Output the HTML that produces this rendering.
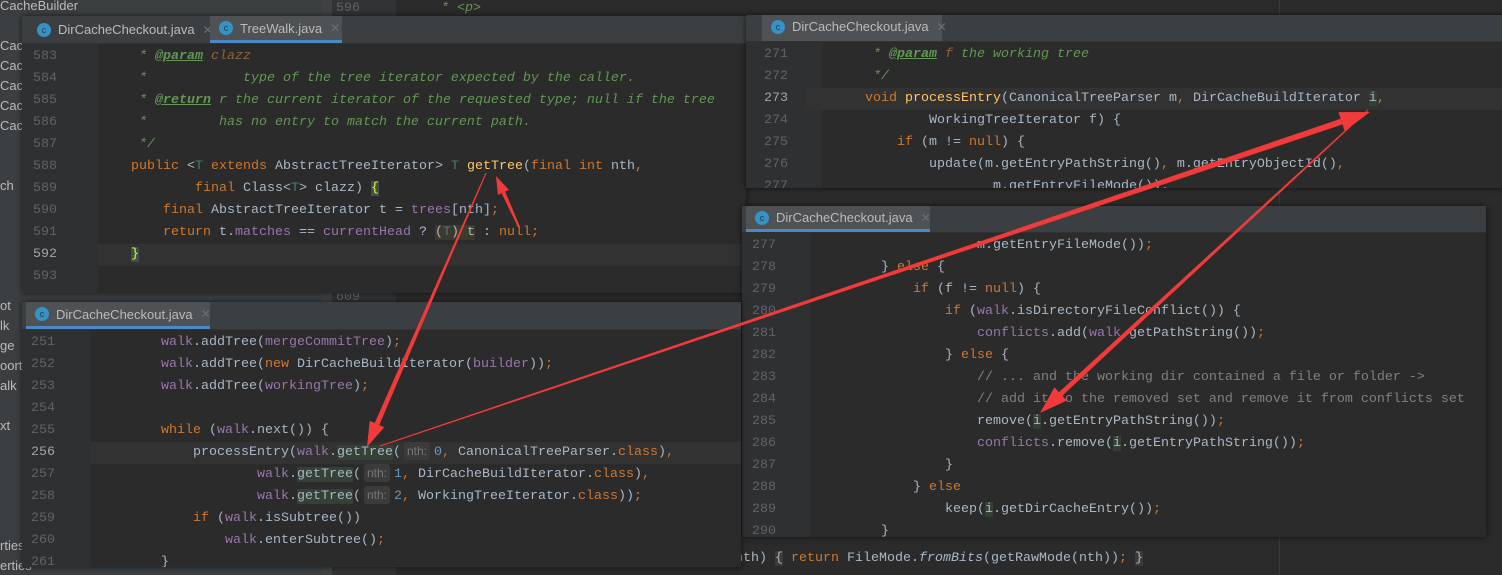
<!DOCTYPE html>
<html><head><meta charset="utf-8">
<style>
*{margin:0;padding:0;box-sizing:border-box}
body{width:1502px;height:575px;overflow:hidden;background:#2b2b2b;position:relative;font-family:"Liberation Mono",monospace;font-size:13.33px;color:#a9b7c6}
.abs{position:absolute}
.panel{position:absolute;background:#2b2b2b;overflow:hidden;box-shadow:0 0 6px rgba(0,0,0,.6)}
.tabbar{position:absolute;left:0;right:0;top:0;background:#3c3f41;border-bottom:1px solid #323232}
.tab{position:absolute;top:0;height:100%;font-family:"Liberation Sans",sans-serif;font-size:13px;color:#bbbbbb;padding-left:30px;display:flex;align-items:center}
.tab.act{border-bottom:3px solid #4a88c7;background:#4e5254}
.tab .ic{position:absolute;left:9px;top:50%;margin-top:-7px;width:14px;height:14px;border-radius:50%;background:#3592c4;color:#1f3a4a;font-size:9px;text-align:center;line-height:14px}
.tab .x{color:#6d7073;margin-left:8px;font-size:12px}
.gut{position:absolute;left:0;bottom:0;background:#2f3032}
.ln{position:absolute;left:0;height:22px;line-height:22px;white-space:pre}
.num{position:absolute;color:#606366;width:30px;text-align:left}
.cur{background:#323232}
.k{color:#cc7832}.f{color:#9876aa}.m{color:#ffc66d}.c{color:#629755;font-style:italic}.t{color:#629755;font-style:italic;text-decoration:underline;font-weight:bold}.g{color:#808080}.n{color:#6897bb}
.hint{display:inline-block;background:#3b3b3b;color:#787878;font-family:"Liberation Sans",sans-serif;font-size:12px;line-height:18px;padding:0 3px;margin:0 4px 0 3px;border-radius:3px;vertical-align:middle}
.hl{background:#344134}
.sb{color:#bbbbbb;font-family:"Liberation Sans",sans-serif;font-size:13px}
</style></head><body>
<div class="abs" style="left:0;top:0;width:330px;height:575px;background:#3c3f41"></div>
<div class="abs sb" style="left:0;top:-2px">CacheBuilder</div>
<div class="abs" style="left:322px;top:0;width:10px;height:575px;background:#3f4244"></div>
<div class="abs" style="left:332px;top:0;width:64px;height:575px;background:#313335"></div>
<div class="abs" style="left:336px;top:1px;color:#606366">596</div>
<div class="abs c" style="left:441px;top:1px">* &lt;p&gt;</div>
<div class="abs" style="left:336px;top:290px;color:#606366">609</div>
<div class="abs" style="left:1279px;top:0;width:1px;height:575px;background:#3a3a3a"></div>
<div class="abs sb" style="left:0;top:38px">Cac</div><div class="abs sb" style="left:0;top:58px">Cac</div><div class="abs sb" style="left:0;top:78px">Cac</div><div class="abs sb" style="left:0;top:98px">Cac</div><div class="abs sb" style="left:0;top:118px">Cac</div>
<div class="abs sb" style="left:0;top:178px">ch</div><div class="abs sb" style="left:0;top:298px">ot</div><div class="abs sb" style="left:0;top:318px">lk</div><div class="abs sb" style="left:0;top:338px">ge</div><div class="abs sb" style="left:0;top:358px">oort</div><div class="abs sb" style="left:0;top:378px">alk</div><div class="abs sb" style="left:0;top:418px">xt</div><div class="abs sb" style="left:0;top:538px">rties</div><div class="abs sb" style="left:0;top:558px">erties</div>
<div class="abs" style="left:735px;top:548px;white-space:pre;line-height:22px">nth) <span style="background:#3b3b3b">{</span> <span class="k">return</span> FileMode.<i>fromBits</i>(getRawMode(nth))<span class="k">;</span> <span style="background:#3b3b3b">}</span></div>

<div class="panel" style="left:22px;top:16px;width:724px;height:277px">
 <div class="tabbar" style="height:28px">
  <div class="tab" style="left:6px;width:182px"><span class="ic">c</span>DirCacheCheckout.java<span class="x">✕</span></div>
  <div class="tab act" style="left:188px;width:132px"><span class="ic">c</span>TreeWalk.java<span class="x">✕</span></div>
 </div>
 <div class="gut" style="top:28px;width:76px"></div>
 <div class="abs" style="left:0;top:30px;width:724px">
  <div class="ln" style="top:0"><span class="num" style="left:11px">583</span><span style="position:absolute;left:109px"> <span class="c">* </span><span class="t">@param</span> <span class="c" style="color:#8a653b">clazz</span></span></div>
  <div class="ln" style="top:22px"><span class="num" style="left:11px">584</span><span style="position:absolute;left:109px" class="c"> *            type of the tree iterator expected by the caller.</span></div>
  <div class="ln" style="top:44px"><span class="num" style="left:11px">585</span><span style="position:absolute;left:109px"> <span class="c">* </span><span class="t">@return</span><span class="c"> r the current iterator of the requested type; null if the tree</span></span></div>
  <div class="ln" style="top:66px"><span class="num" style="left:11px">586</span><span style="position:absolute;left:109px" class="c"> *         has no entry to match the current path.</span></div>
  <div class="ln" style="top:88px"><span class="num" style="left:11px">587</span><span style="position:absolute;left:109px" class="c"> */</span></div>
  <div class="ln" style="top:110px"><span class="num" style="left:11px">588</span><span style="position:absolute;left:109px"><span class="k">public</span> &lt;<span style="color:#507874">T</span> <span class="k">extends</span> AbstractTreeIterator&gt; <span style="color:#507874">T</span> <span class="m">getTree</span>(<span class="k">final int</span> nth<span class="k">,</span></span></div>
  <div class="ln" style="top:132px"><span class="num" style="left:11px">589</span><span style="position:absolute;left:109px">        <span class="k">final</span> Class&lt;<span style="color:#507874">T</span>&gt; clazz) <span style="color:#ffef28;background:#3b514d">{</span></span></div>
  <div class="ln" style="top:154px"><span class="num" style="left:11px">590</span><span style="position:absolute;left:109px">    <span class="k">final</span> AbstractTreeIterator t = <span class="f">trees</span>[nth]<span class="k">;</span></span></div>
  <div class="ln" style="top:176px"><span class="num" style="left:11px">591</span><span style="position:absolute;left:109px">    <span class="k">return</span> t.<span class="f">matches</span> == <span class="f">currentHead</span> ? <span style="background:#3b3a2c">(<span style="color:#507874">T</span>) t</span> : <span class="k">null;</span></span></div>
  <div class="ln cur" style="top:198px;width:724px;left:76px"></div>
  <div class="ln" style="top:198px"><span class="num" style="left:11px;color:#a4a3a3">592</span><span style="position:absolute;left:109px"><span style="color:#ffef28;background:#3b514d">}</span></span></div>
  <div class="ln" style="top:220px"><span class="num" style="left:11px">593</span></div>
 </div>
</div>

<div class="panel" style="left:746px;top:15px;width:760px;height:173px">
 <div class="tabbar" style="height:27px">
  <div class="tab act" style="left:16px;width:180px;border-bottom-color:#4e5254"><span class="ic">c</span>DirCacheCheckout.java<span class="x">✕</span></div>
 </div>
 <div class="gut" style="top:27px;width:76px"></div>
 <div class="abs" style="left:0;top:29px;width:760px">
  <div class="ln" style="top:0"><span class="num" style="left:18px">271</span><span style="position:absolute;left:119px"> <span class="c">* </span><span class="t">@param</span> <span class="c" style="color:#8a653b">f</span><span class="c"> the working tree</span></span></div>
  <div class="ln" style="top:22px"><span class="num" style="left:18px">272</span><span style="position:absolute;left:119px" class="c"> */</span></div>
  <div class="ln cur" style="top:44px;width:760px;left:60px"></div>
  <div class="ln" style="top:44px"><span class="num" style="left:18px;color:#a4a3a3">273</span><span style="position:absolute;left:119px"><span class="k">void</span> <span class="m">processEntry</span>(CanonicalTreeParser m<span class="k">,</span> DirCacheBuildIterator <span class="hl">i</span><span class="k">,</span></span></div>
  <div class="ln" style="top:66px"><span class="num" style="left:18px">274</span><span style="position:absolute;left:119px">        WorkingTreeIterator f) {</span></div>
  <div class="ln" style="top:88px"><span class="num" style="left:18px">275</span><span style="position:absolute;left:119px">    <span class="k">if</span> (m != <span class="k">null</span>) {</span></div>
  <div class="ln" style="top:110px"><span class="num" style="left:18px">276</span><span style="position:absolute;left:119px">        update(m.getEntryPathString()<span class="k">,</span> m.getEntryObjectId()<span class="k">,</span></span></div>
  <div class="ln" style="top:132px"><span class="num" style="left:18px">277</span><span style="position:absolute;left:119px">                m.getEntryFileMode())<span class="k">;</span></span></div>
 </div>
</div>

<div class="panel" style="left:742px;top:206px;width:744px;height:331px">
 <div class="tabbar" style="height:27px">
  <div class="tab act" style="left:4px;width:184px"><span class="ic">c</span>DirCacheCheckout.java<span class="x">✕</span></div>
 </div>
 <div class="gut" style="top:27px;width:68px"></div>
 <div class="abs" style="left:0;top:29px;width:744px">
  <div class="ln" style="top:0"><span class="num" style="left:10px">277</span><span style="position:absolute;left:107px">                m.getEntryFileMode())<span class="k">;</span></span></div>
  <div class="ln" style="top:22px"><span class="num" style="left:10px">278</span><span style="position:absolute;left:107px">    } <span class="k">else</span> {</span></div>
  <div class="ln" style="top:44px"><span class="num" style="left:10px">279</span><span style="position:absolute;left:107px">        <span class="k">if</span> (f != <span class="k">null</span>) {</span></div>
  <div class="ln" style="top:66px"><span class="num" style="left:10px">280</span><span style="position:absolute;left:107px">            <span class="k">if</span> (<span class="f">walk</span>.isDirectoryFileConflict()) {</span></div>
  <div class="ln" style="top:88px"><span class="num" style="left:10px">281</span><span style="position:absolute;left:107px">                <span class="f">conflicts</span>.add(<span class="f">walk</span>.getPathString())<span class="k">;</span></span></div>
  <div class="ln" style="top:110px"><span class="num" style="left:10px">282</span><span style="position:absolute;left:107px">            } <span class="k">else</span> {</span></div>
  <div class="ln" style="top:132px"><span class="num" style="left:10px">283</span><span style="position:absolute;left:107px" class="g">                // ... and the working dir contained a file or folder -&gt;</span></div>
  <div class="ln" style="top:154px"><span class="num" style="left:10px">284</span><span style="position:absolute;left:107px" class="g">                // add it to the removed set and remove it from conflicts set</span></div>
  <div class="ln" style="top:176px"><span class="num" style="left:10px">285</span><span style="position:absolute;left:107px">                remove(<span class="hl">i</span>.getEntryPathString())<span class="k">;</span></span></div>
  <div class="ln" style="top:198px"><span class="num" style="left:10px">286</span><span style="position:absolute;left:107px">                <span class="f">conflicts</span>.remove(<span class="hl">i</span>.getEntryPathString())<span class="k">;</span></span></div>
  <div class="ln" style="top:220px"><span class="num" style="left:10px">287</span><span style="position:absolute;left:107px">            }</span></div>
  <div class="ln" style="top:242px"><span class="num" style="left:10px">288</span><span style="position:absolute;left:107px">        } <span class="k">else</span></span></div>
  <div class="ln" style="top:264px"><span class="num" style="left:10px">289</span><span style="position:absolute;left:107px">            keep(<span class="hl">i</span>.getDirCacheEntry())<span class="k">;</span></span></div>
  <div class="ln" style="top:286px"><span class="num" style="left:10px">290</span><span style="position:absolute;left:107px">    }</span></div>
 </div>
</div>

<div class="panel" style="left:22px;top:302px;width:719px;height:265px">
 <div class="tabbar" style="height:28px">
  <div class="tab act" style="left:4px;width:184px"><span class="ic">c</span>DirCacheCheckout.java<span class="x">✕</span></div>
 </div>
 <div class="gut" style="top:28px;width:68px"></div>
 <div class="abs" style="left:0;top:30px;width:719px">
  <div class="ln" style="top:0"><span class="num" style="left:9px">251</span><span style="position:absolute;left:107px">    <span class="f">walk</span>.addTree(<span class="f">mergeCommitTree</span>)<span class="k">;</span></span></div>
  <div class="ln" style="top:22px"><span class="num" style="left:9px">252</span><span style="position:absolute;left:107px">    <span class="f">walk</span>.addTree(<span class="k">new</span> DirCacheBuildIterator(<span class="f">builder</span>))<span class="k">;</span></span></div>
  <div class="ln" style="top:44px"><span class="num" style="left:9px">253</span><span style="position:absolute;left:107px">    <span class="f">walk</span>.addTree(<span class="f">workingTree</span>)<span class="k">;</span></span></div>
  <div class="ln" style="top:66px"><span class="num" style="left:9px">254</span></div>
  <div class="ln" style="top:88px"><span class="num" style="left:9px">255</span><span style="position:absolute;left:107px">    <span class="k">while</span> (<span class="f">walk</span>.next()) {</span></div>
  <div class="ln cur" style="top:110px;width:719px;left:68px"></div>
  <div class="ln" style="top:110px"><span class="num" style="left:9px;color:#a4a3a3">256</span><span style="position:absolute;left:107px">        processEntry(<span class="f">walk</span>.<span class="hl">getTree</span>(<span class="hint">nth:</span><span class="n">0</span><span class="k">,</span> CanonicalTreeParser.<span class="k">class</span>)<span class="k">,</span></span></div>
  <div class="ln" style="top:132px"><span class="num" style="left:9px">257</span><span style="position:absolute;left:107px">                <span class="f">walk</span>.<span class="hl">getTree</span>(<span class="hint">nth:</span><span class="n">1</span><span class="k">,</span> DirCacheBuildIterator.<span class="k">class</span>)<span class="k">,</span></span></div>
  <div class="ln" style="top:154px"><span class="num" style="left:9px">258</span><span style="position:absolute;left:107px">                <span class="f">walk</span>.<span class="hl">getTree</span>(<span class="hint">nth:</span><span class="n">2</span><span class="k">,</span> WorkingTreeIterator.<span class="k">class</span>))<span class="k">;</span></span></div>
  <div class="ln" style="top:176px"><span class="num" style="left:9px">259</span><span style="position:absolute;left:107px">        <span class="k">if</span> (<span class="f">walk</span>.isSubtree())</span></div>
  <div class="ln" style="top:198px"><span class="num" style="left:9px">260</span><span style="position:absolute;left:107px">            <span class="f">walk</span>.enterSubtree()<span class="k">;</span></span></div>
  <div class="ln" style="top:220px"><span class="num" style="left:9px">261</span><span style="position:absolute;left:107px">    }</span></div>
 </div>
</div>

<svg class="abs" style="left:0;top:0" width="1502" height="575" viewBox="0 0 1502 575">
 <g fill="#f23a3a">
  <polygon points="519.9,226.6 518.1,227.4 501.6,193.2 505.2,191.6"/>
  <polygon points="508.9,189.9 497.9,194.9 496,176"/>
  <polygon points="486.5,173.2 485.5,172.8 374.7,423 379.3,425"/>
  <polygon points="384.3,427.2 369.7,420.8 367,447"/>
  <polygon points="380.2,446.5 379.8,445.5 1340.6,118.8 1342.6,124.4"/>
  <polygon points="1344.8,131.1 1338.4,112.1 1370,112"/>
  <polygon points="1368.4,110.4 1367.6,109.6 1058.9,392.2 1062.3,395.8"/>
  <polygon points="1066.7,400.6 1054.5,387.4 1040,413"/>
 </g>
</svg>
</body></html>
